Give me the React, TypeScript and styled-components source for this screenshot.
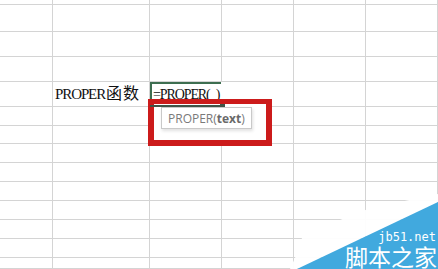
import React from 'react'
import styled, { createGlobalStyle } from 'styled-components'

const GlobalStyle = createGlobalStyle`
  html, body {
    margin: 0;
    padding: 0;
    background: #fff;
  }
  body {
    overflow: hidden;
  }
`

// column widths and row heights as they appear in the screenshot
const COLS = [53, 97, 72, 72, 72, 72]
const ROWS = [3, 29, 25, 25, 25, 19, 18, 19, 19, 19, 19, 19, 19, 11]

const Page = styled.div`
  position: relative;
  width: 438px;
  height: 269px;
  overflow: hidden;
  background: #fff;
`

const Sheet = styled.div`
  display: grid;
  grid-template-columns: ${COLS.map(c => `${c}px`).join(' ')};
  grid-template-rows: ${ROWS.map(r => `${r}px`).join(' ')};
`

const Cell = styled.div<{ $active?: boolean }>`
  box-sizing: border-box;
  border-right: 1px solid #d4d4d4;
  border-bottom: 1px solid #d4d4d4;
  display: flex;
  align-items: flex-end;
  padding: 0 0 4px 2px;
  white-space: nowrap;
  ${p => p.$active && `
    box-shadow: inset 2px 2px 0 #3d6e50;
    border-right-color: transparent;
    padding-left: 3px;
  `}
`

const CellText = styled.div`
  font-family: "Liberation Serif", "Noto Sans CJK SC", serif;
  font-size: 15px;
  line-height: 15px;
  color: #111;
`

const Latin = styled.span<{ $size?: number }>`
  font-size: ${p => p.$size ?? 15}px;
  letter-spacing: -1.1px;
`

const Han = styled.span`
  font-family: "Noto Sans CJK SC", sans-serif;
  font-size: 16px;
  letter-spacing: 1px;
  margin-left: 1px;
`

const Parens = styled.span`
  font-size: 14px;
  letter-spacing: 5px;
`

const RedMark = styled.div`
  position: absolute;
  left: 148px;
  top: 99px;
  width: 124px;
  height: 47px;
  box-sizing: border-box;
  border: 6px solid #cc1b1b;
  border-top-width: 5px;
  background: #fff;
  display: flex;
  flex-direction: column;
`

const EdgeRow = styled.div`
  display: flex;
  align-items: center;
  height: 4px;
  margin-left: -4px;
`

const EdgeLine = styled.div`
  width: 70px;
  height: 2px;
  background: #3f5447;
`

const Handle = styled.div`
  width: 5px;
  height: 4px;
  background: #3f5447;
`

const Tip = styled.div`
  align-self: flex-start;
  margin: -1px 0 0 7px;
  box-sizing: border-box;
  width: 91px;
  height: 22px;
  border: 1px solid #c9c9c9;
  background: #fff;
  box-shadow: 1px 2px 3px rgba(0, 0, 0, 0.12);
  display: flex;
  align-items: center;
  padding-left: 6px;
  font-family: "Open Sans", "Noto Sans", sans-serif;
  font-size: 12px;
  color: #7a7a7a;
  white-space: nowrap;
`

const Arg = styled.b`
  font-weight: 700;
  color: #6a6a6a;
`

const Watermark = styled.div`
  position: absolute;
  right: 0;
  bottom: 0;
  width: 148px;
  height: 79px;
  display: flex;
  flex-direction: column;
  align-items: flex-end;
  justify-content: flex-end;
  color: #fff;
`

const Backdrop = styled.svg`
  position: absolute;
  inset: 0;
`

const Site = styled.span`
  position: relative;
  font-family: "DejaVu Sans Mono", "Liberation Mono", monospace;
  font-size: 12px;
  line-height: 13px;
  margin-right: 2px;
`

const Brand = styled.span`
  position: relative;
  font-family: "Noto Sans CJK SC", sans-serif;
  font-size: 23px;
  line-height: 25px;
  margin-right: 1px;
`

const App = () => {
  return (
    <Page>
      <GlobalStyle />
      <Sheet>
        {ROWS.map((_, r) =>
          COLS.map((_, c) => {
            if (r === 4 && c === 1) {
              return (
                <Cell key={`${r}-${c}`}>
                  <CellText>
                    <Latin>PROPER</Latin>
                    <Han>函数</Han>
                  </CellText>
                </Cell>
              )
            }
            if (r === 4 && c === 2) {
              return (
                <Cell key={`${r}-${c}`} $active>
                  <CellText>
                    <Latin $size={14}>=PROPER</Latin>
                    <Parens>()</Parens>
                  </CellText>
                </Cell>
              )
            }
            return <Cell key={`${r}-${c}`} />
          })
        )}
      </Sheet>

      <RedMark>
        <EdgeRow>
          <EdgeLine />
          <Handle />
        </EdgeRow>
        <Tip>
          PROPER(<Arg>text</Arg>)
        </Tip>
      </RedMark>

      <Watermark>
        <Backdrop width="148" height="79" viewBox="0 0 148 79">
          <polygon
            points="0,79 5,68 12,48 50,30 78,19 133,7 148,4 148,12 7,79"
            fill="#fff"
            fillOpacity="0.95"
          />
          <polygon points="7,79 148,12 148,79" fill="#41a9de" />
        </Backdrop>
        <Site>jb51.net</Site>
        <Brand>脚本之家</Brand>
      </Watermark>
    </Page>
  )
}

export default App
